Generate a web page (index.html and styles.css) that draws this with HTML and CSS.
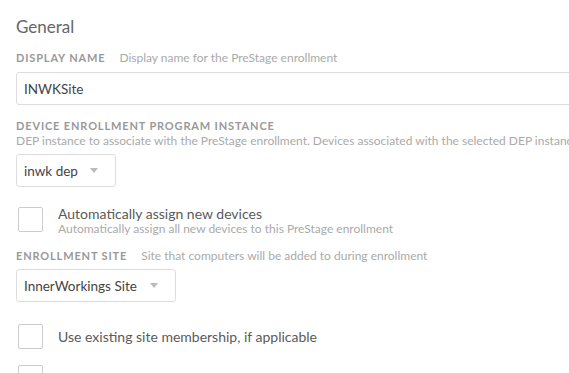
FILE: index.html
```html
<!DOCTYPE html>
<html>
<head>
<meta charset="utf-8">
<link rel="stylesheet" href="styles.css">
</head>
<body>
<div class="page">
  <h2 class="section-title">General</h2>

  <div class="field-label"><span class="label">Display Name</span><span class="help">Display name for the PreStage enrollment</span></div>
  <div class="input">INWKSite</div>

  <div class="field-label stacked"><span class="label">Device Enrollment Program Instance</span></div>
  <div class="help-line">DEP instance to associate with the PreStage enrollment. Devices associated with the selected DEP instance</div>
  <div class="select select-dep"><span>inwk dep</span><span class="caret"></span></div>

  <div class="check-row first">
    <span class="checkbox"></span>
    <div class="check-text">
      <div class="check-title">Automatically assign new devices</div>
      <div class="check-sub">Automatically assign all new devices to this PreStage enrollment</div>
    </div>
  </div>

  <div class="field-label site"><span class="label">Enrollment Site</span><span class="help">Site that computers will be added to during enrollment</span></div>
  <div class="select select-site"><span>InnerWorkings Site</span><span class="caret"></span></div>

  <div class="check-row single">
    <span class="checkbox"></span>
    <div class="check-title">Use existing site membership, if applicable</div>
  </div>

  <div class="check-row last">
    <span class="checkbox"></span>
  </div>
</div>
</body>
</html>
```

FILE: styles.css
```css
html, body {
  margin: 0;
  padding: 0;
  background: #fff;
  overflow: hidden;
}
body {
  font-family: Lato, "Open Sans", sans-serif;
  color: #555;
}
.page {
  width: 640px;
  padding: 16px 0 0 16px;
}
.section-title {
  margin: 0;
  font-size: 17px;
  line-height: 22px;
  font-weight: 400;
  color: #666;
}
.field-label {
  display: flex;
  align-items: baseline;
  margin-top: 12px;
  line-height: 16px;
  white-space: nowrap;
}
.field-label.stacked {
  margin-top: 13px;
}
.field-label.site {
  margin-top: 13px;
}
.label {
  font-size: 11px;
  font-weight: 700;
  letter-spacing: 0.85px;
  text-transform: uppercase;
  color: #999;
}
.help {
  margin-left: 14px;
  font-size: 12px;
  color: #aaa;
}
.help-line {
  font-size: 12px;
  line-height: 14px;
  color: #aaa;
  white-space: nowrap;
}
.input {
  margin-top: 6px;
  height: 31px;
  border: 1px solid #ddd;
  border-radius: 3px;
  padding: 0 7px;
  display: flex;
  align-items: center;
  font-size: 13.5px;
  color: #444;
}
.select {
  margin-top: 6px;
  height: 31px;
  border: 1px solid #ddd;
  border-radius: 3px;
  padding: 0 7px;
  display: inline-flex;
  align-items: center;
  box-sizing: content-box;
  font-size: 13.5px;
  color: #444;
}
.select-dep {
  width: 84px;
}
.select-site {
  width: 144px;
  margin-top: 5px;
}
.caret {
  margin-left: auto;
  margin-right: 10px;
  width: 0;
  height: 0;
  border-left: 4px solid transparent;
  border-right: 4px solid transparent;
  border-top: 5px solid #bbb;
}
.check-row {
  display: flex;
  align-items: flex-start;
  margin-left: 2px;
}
.check-row.first {
  margin-top: 20px;
}
.check-row.single {
  margin-top: 22px;
  align-items: center;
}
.check-row.last {
  margin-top: 16px;
  align-items: center;
}
.checkbox {
  flex: none;
  width: 23px;
  height: 23px;
  border: 1px solid #ccc;
  border-radius: 2px;
  margin-right: 15px;
}
.check-text {
  margin-top: -1px;
}
.check-title {
  font-size: 14px;
  line-height: 16px;
  color: #5a5a5a;
  white-space: nowrap;
}
.check-sub {
  font-size: 12px;
  line-height: 13px;
  color: #aaa;
  white-space: nowrap;
}
```
